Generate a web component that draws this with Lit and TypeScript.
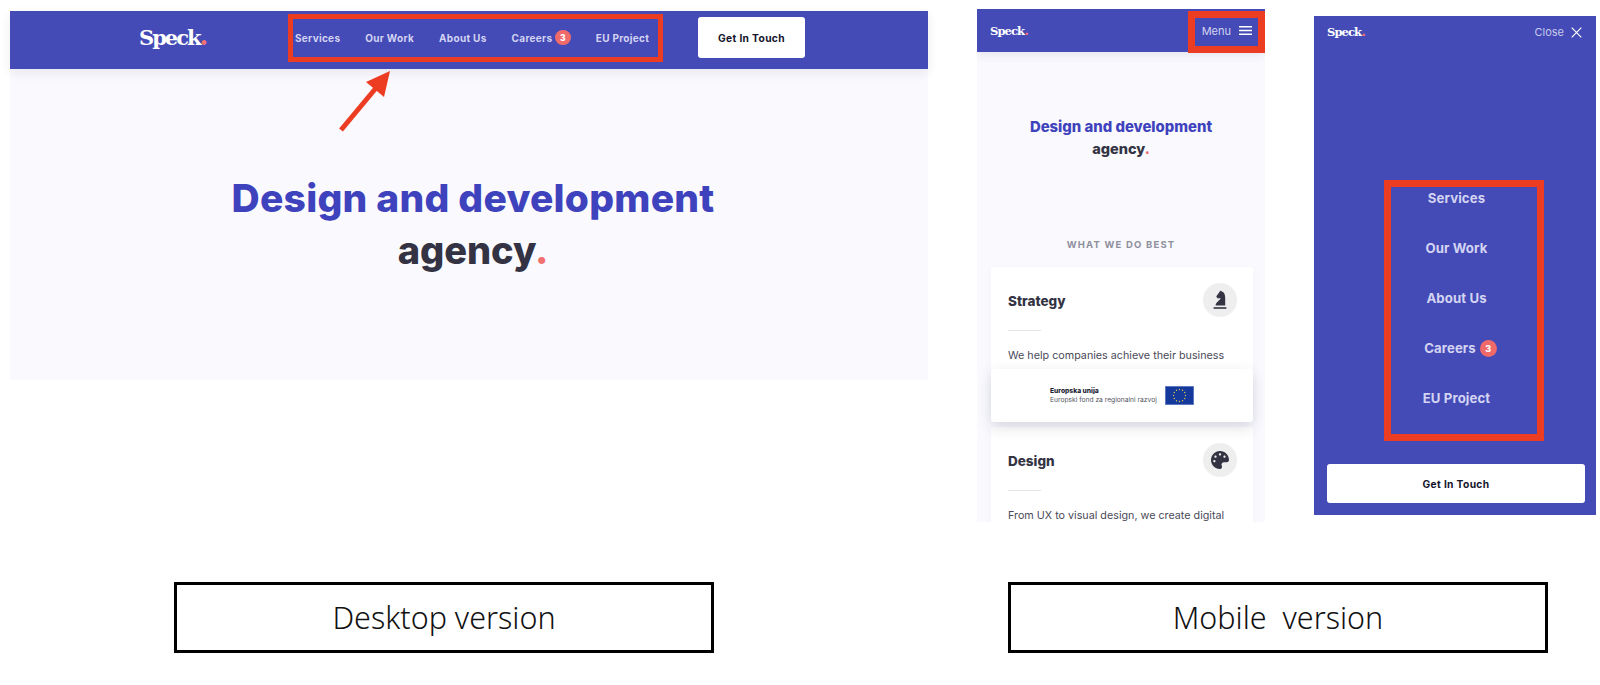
import { LitElement, html, css, svg } from "lit";
import { customElement } from "lit/decorators.js";

const palette = svg`<svg class="ico-pal" viewBox="0 0 512 512"><path fill="#333343" d="M204.3 5C104.9 24.4 24.8 104.3 5.2 203.4c-37 187 131.7 326.4 258.8 306.7 41.2-6.4 61.4-54.6 42.5-91.7-23.1-45.4 9.9-98.4 60.9-98.4h79.7c35.8 0 64.8-29.6 64.9-65.3C511.5 97.1 368.1-26.9 204.3 5zM96 320c-17.7 0-32-14.3-32-32s14.3-32 32-32 32 14.3 32 32-14.3 32-32 32zm32-128c-17.7 0-32-14.3-32-32s14.3-32 32-32 32 14.3 32 32-14.3 32-32 32zm128-64c-17.7 0-32-14.3-32-32s14.3-32 32-32 32 14.3 32 32-14.3 32-32 32zm128 64c-17.7 0-32-14.3-32-32s14.3-32 32-32 32 14.3 32 32-14.3 32-32 32z"/></svg>`;
const knight = svg`<svg class="ico-kn" viewBox="0 0 14 20"><path fill="#333343" d="M2.6 15.6C2.6 12 7.2 10.6 7.6 8L4.8 8.6 3.2 6.6 6.8 1.6 7.7 0.4 8.8 1.4C11.3 2 12.2 4.5 12.2 8V15.6Z"/><rect x="0.6" y="17.2" width="12.8" height="1.6" fill="#333343"/></svg>`;

@customElement("app-root")
export class AppRoot extends LitElement {
  static styles = css`
    :host { display: block; position: relative; width: 1600px; height: 685px; overflow: hidden; background: #fff; font-family: Inter, Lato, "Noto Sans", sans-serif; }
    * { box-sizing: border-box; }
    .top { display: flex; align-items: flex-start; height: 582px; padding-left: 10px; }
    .desktop { width: 918px; height: 369px; margin-top: 11px; background: #f9f9fe; }
    .bar { background: #444ab6; display: flex; align-items: center; }
    .d-bar { height: 58px; padding: 0 123px 5px 130px; box-shadow: 0 4px 10px rgba(50,50,80,.09); }
    .logo { font-family: "DejaVu Serif", serif; font-weight: 700; color: #fff; }
    .logo i { font-style: normal; color: #f17070; font-size: 1.2em; line-height: 0; }
    .logo-l { font-size: 21px; letter-spacing: -2px; width: 155px; margin-left: -1px; flex: none; }
    .logo-s { font-size: 11.5px; letter-spacing: -0.9px; }
    .d-nav { display: flex; align-items: center; gap: 25px; margin-left: 1px; font-size: 10px; font-weight: 700; letter-spacing: .3px; color: #d3d4f2; }
    .item { display: flex; align-items: center; gap: 3px; }
    .badge { display: flex; align-items: center; justify-content: center; border-radius: 50%; background: #f06a6a; color: #fff; font-weight: 800; }
    .badge-s { width: 15.5px; height: 15.5px; font-size: 8.5px; }
    .badge-m { width: 17px; height: 17px; font-size: 9px; }
    .btn { display: flex; align-items: center; justify-content: center; background: #fff; border-radius: 3px; color: #14142b; font-weight: 700; font-size: 10.25px; letter-spacing: .35px; }
    .d-btn { width: 107px; height: 41px; margin-left: auto; }
    .d-hero { padding: 102px 0 0 8px; text-align: center; font-size: 38px; line-height: 53px; font-weight: 800; color: #3f42bd; letter-spacing: -.1px; }
    .dark { color: #333343; }
    .dot { color: #f17070; }
    .title-line { display: block; }
    .title-first { font-size: 1.026em; letter-spacing: .006em; }

    .phone { width: 288px; height: 513px; margin: 9px 0 0 49px; background: #f9f9fe; overflow: hidden; position: relative; }
    .p-bar { height: 43px; padding: 0 13px; justify-content: space-between; box-shadow: 0 3px 9px rgba(50,50,80,.1); position: relative; }
    .toggle { display: flex; align-items: center; gap: 8px; font-size: 11px; color: #d3d4f2; }
    .burger { width: 13px; height: 9px; display: block; }
    .p-hero { padding-top: 64px; text-align: center; font-size: 14.5px; line-height: 22px; font-weight: 800; color: #3f42bd; }
    .p-hero .title-first { letter-spacing: 0; }
    .eyebrow { margin-top: 77px; height: 16px; line-height: 16px; text-align: center; font-size: 9.5px; font-weight: 700; letter-spacing: 1.2px; color: #8f8f9d; }
    .cards { display: flex; flex-direction: column; gap: 8px; margin: 14px 12px 0 14px; }
    .card { background: #fff; border-radius: 3px; padding: 16px 16px 0 17px; height: 152px; box-shadow: 0 2px 8px rgba(50,50,80,.03); }
    .card-head { display: flex; align-items: center; justify-content: space-between; height: 34px; font-size: 13.5px; font-weight: 800; color: #333343; }
    .name { margin-top: 2px; }
    .circle { width: 34px; height: 34px; border-radius: 50%; background: #eeeeef; display: flex; align-items: center; justify-content: center; }
    .ico-kn { width: 14px; height: 20px; }
    .ico-pal { width: 18px; height: 18px; }
    .rule { width: 33px; height: 1px; background: #e4e4ea; margin-top: 13px; }
    .card p { margin: 13px 0 0; font-size: 10.75px; line-height: 24px; color: #4a4a58; white-space: nowrap; }
    .eu { position: absolute; left: 14px; right: 12px; top: 360px; height: 53px; background: #fff; border-radius: 3px; box-shadow: 0 5px 14px rgba(50,50,80,.16); display: flex; align-items: center; padding-left: 59px; gap: 8px; }
    .eu-text { font-size: 6.7px; line-height: 9px; color: #55555f; white-space: nowrap; }
    .eu-text b { display: block; color: #222232; font-weight: 800; }
    .flag { width: 29px; height: 19px; display: block; }

    .menu { width: 282px; height: 499px; margin: 16px 0 0 49px; background: #444ab6; display: flex; flex-direction: column; }
    .m-bar { height: 32px; padding: 0 14px 0 13px; justify-content: space-between; background: none; }
    .close { display: flex; align-items: center; gap: 7px; font-size: 11px; color: #c9cbed; }
    .x { width: 11px; height: 11px; }
    .m-nav { margin-top: 125px; padding-left: 3px; display: flex; flex-direction: column; align-items: center; color: #d3d4f2; font-size: 13.2px; font-weight: 700; letter-spacing: .1px; }
    .m-nav .item { height: 50px; gap: 4px; }
    .m-nav .item:nth-child(4) { margin-left: 8px; }
    .m-btn { margin: 41px 11px 0 13px; height: 39px; padding-top: 1px; }

    .labels { display: flex; gap: 294px; padding-left: 174px; }
    .label { width: 540px; height: 71px; border: 3px solid #000; padding-bottom: 2px; display: flex; align-items: center; justify-content: center; font-family: "Noto Sans", sans-serif; font-weight: 300; font-size: 30.5px; color: #111; white-space: pre; }

    .mark { position: absolute; border-style: solid; border-color: #ec3d23; pointer-events: none; }
    .m1 { left: 288px; top: 14px; width: 375px; height: 48px; border-width: 5px; }
    .m2 { left: 1188px; top: 11px; width: 77px; height: 42px; border-width: 7px; }
    .m3 { left: 1384px; top: 180px; width: 160px; height: 261px; border-width: 7px; }
    .arrow { position: absolute; left: 335px; top: 65px; width: 65px; height: 70px; }
  `;

  private nav(cls: string, badge: string) {
    return html`<nav class=${cls}>
      <span class="item">Services</span>
      <span class="item">Our Work</span>
      <span class="item">About Us</span>
      <span class="item">Careers <span class="badge ${badge}">3</span></span>
      <span class="item">EU Project</span>
    </nav>`;
  }

  render() {
    return html`
      <div class="top">
        <section class="desktop">
          <header class="bar d-bar">
            <span class="logo logo-l">Speck<i>.</i></span>
            ${this.nav("d-nav", "badge-s")}
            <a class="btn d-btn">Get In Touch</a>
          </header>
          <div class="d-hero">
            <span class="title-line title-first">Design and development</span>
            <span class="title-line dark">agency<span class="dot">.</span></span>
          </div>
        </section>

        <section class="phone">
          <header class="bar p-bar">
            <span class="logo logo-s">Speck<i>.</i></span>
            <span class="toggle">Menu
              <svg class="burger" viewBox="0 0 13 9"><path d="M0 .75h13M0 4.5h13M0 8.25h13" stroke="#fff" stroke-width="1.5" fill="none"/></svg>
            </span>
          </header>
          <div class="p-hero">
            <span class="title-line title-first">Design and development</span>
            <span class="title-line dark">agency<span class="dot">.</span></span>
          </div>
          <div class="eyebrow">WHAT WE DO BEST</div>
          <div class="cards">
            <article class="card">
              <div class="card-head"><span class="name">Strategy</span> <span class="circle">${knight}</span></div>
              <div class="rule"></div>
              <p>We help companies achieve their business</p>
            </article>
            <article class="card">
              <div class="card-head"><span class="name">Design</span> <span class="circle">${palette}</span></div>
              <div class="rule"></div>
              <p>From UX to visual design, we create digital</p>
            </article>
          </div>
          <div class="eu">
            <div class="eu-text"><b>Europska unija</b>Europski fond za regionalni razvoj</div>
            <svg class="flag" viewBox="0 0 29 19">
              <rect x=".25" y=".25" width="28.5" height="18.5" fill="#14399a" stroke="#6f86cf" stroke-width=".5"/>
              ${Array.from({ length: 12 }, (_, i) => {
                const a = (i * Math.PI) / 6;
                return svg`<circle cx=${14.5 + 6 * Math.cos(a)} cy=${9.5 + 6 * Math.sin(a)} r=".7" fill="#d9c64a"/>`;
              })}
            </svg>
          </div>
        </section>

        <section class="menu">
          <header class="bar m-bar">
            <span class="logo logo-s">Speck<i>.</i></span>
            <span class="close">Close
              <svg class="x" viewBox="0 0 11 11"><path d="M.7.7l9.6 9.6M10.3.7L.7 10.3" stroke="#fff" stroke-width="1.2" fill="none"/></svg>
            </span>
          </header>
          ${this.nav("m-nav", "badge-m")}
          <a class="btn m-btn">Get In Touch</a>
        </section>
      </div>

      <div class="labels">
        <div class="label">Desktop version</div>
        <div class="label">Mobile  version</div>
      </div>

      <div class="mark m1"></div>
      <div class="mark m2"></div>
      <div class="mark m3"></div>
      <svg class="arrow" viewBox="335 65 65 70">
        <path d="M341 130L376 88" stroke="#ec3d23" stroke-width="5" fill="none"/>
        <path d="M390 71L366 82L384 97Z" fill="#ec3d23"/>
      </svg>
    `;
  }
}
